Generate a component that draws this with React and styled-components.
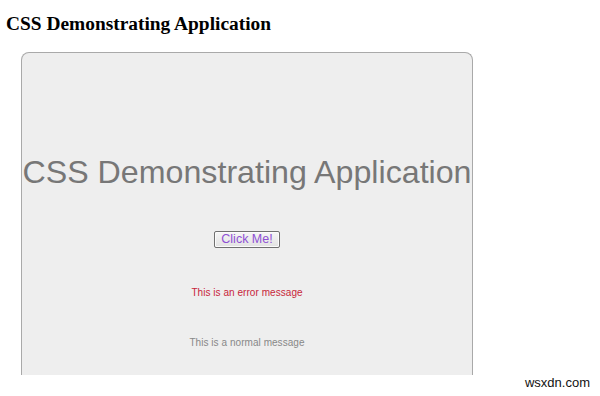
import React from "react";
import styled, { createGlobalStyle } from "styled-components";

const Global = createGlobalStyle`
  html, body { margin: 0; padding: 0; background: #fff; }
  body { width: 600px; height: 396px; overflow: hidden; position: relative; }
`;

const Page = styled.div`
  padding: 13px 0 0 6px;
  height: 396px;
  box-sizing: border-box;
`;

const Heading = styled.h3`
  margin: 0;
  font-family: "Liberation Serif", "Times New Roman", serif;
  font-weight: bold;
  font-size: 19.4px;
  line-height: 22px;
  color: #000;
`;

const Panel = styled.div`
  margin: 17px 0 0 15px;
  width: 452px;
  height: 323px;
  box-sizing: border-box;
  background: #eeeeee;
  border: 1px solid #a9a9a9;
  border-bottom: none;
  border-radius: 8px 8px 0 0;
  display: flex;
  flex-direction: column;
  align-items: center;
  font-family: "Liberation Sans", Arial, sans-serif;
`;

const Title = styled.h1`
  margin: 101px 0 0 0;
  font-weight: normal;
  font-size: 32.2px;
  line-height: 36px;
  color: #777;
  white-space: nowrap;
`;

const Button = styled.button`
  margin-top: 41px;
  width: 66px;
  height: 17px;
  padding: 0;
  font-family: "Liberation Sans", Arial, sans-serif;
  font-size: 12.5px;
  line-height: 15px;
  color: #8e50d4;
  border: 1px solid #707070;
  border-radius: 2px;
  background: linear-gradient(#f6f6f6, #e2e2e2);
  box-shadow: inset 0 0 0 1px #fbfbfb;
`;

const Message = styled.p`
  margin: ${(p) => p.$top}px 0 0 0;
  font-size: 10px;
  line-height: 13px;
  letter-spacing: 0.05px;
  color: ${(p) => (p.$error ? "#c8253a" : "#888")};
`;

const Watermark = styled.div`
  position: absolute;
  right: 10px;
  bottom: 6px;
  font-family: "Liberation Sans", Arial, sans-serif;
  font-size: 13px;
  color: #111;
`;

export default function App() {
  return (
    <>
      <Global />
      <Page>
        <Heading>CSS Demonstrating Application</Heading>
        <Panel>
          <Title>CSS Demonstrating Application</Title>
          <Button>Click Me!</Button>
          <Message $error $top={38}>This is an error message</Message>
          <Message $top={37}>This is a normal message</Message>
        </Panel>
      </Page>
      <Watermark>wsxdn.com</Watermark>
    </>
  );
}
